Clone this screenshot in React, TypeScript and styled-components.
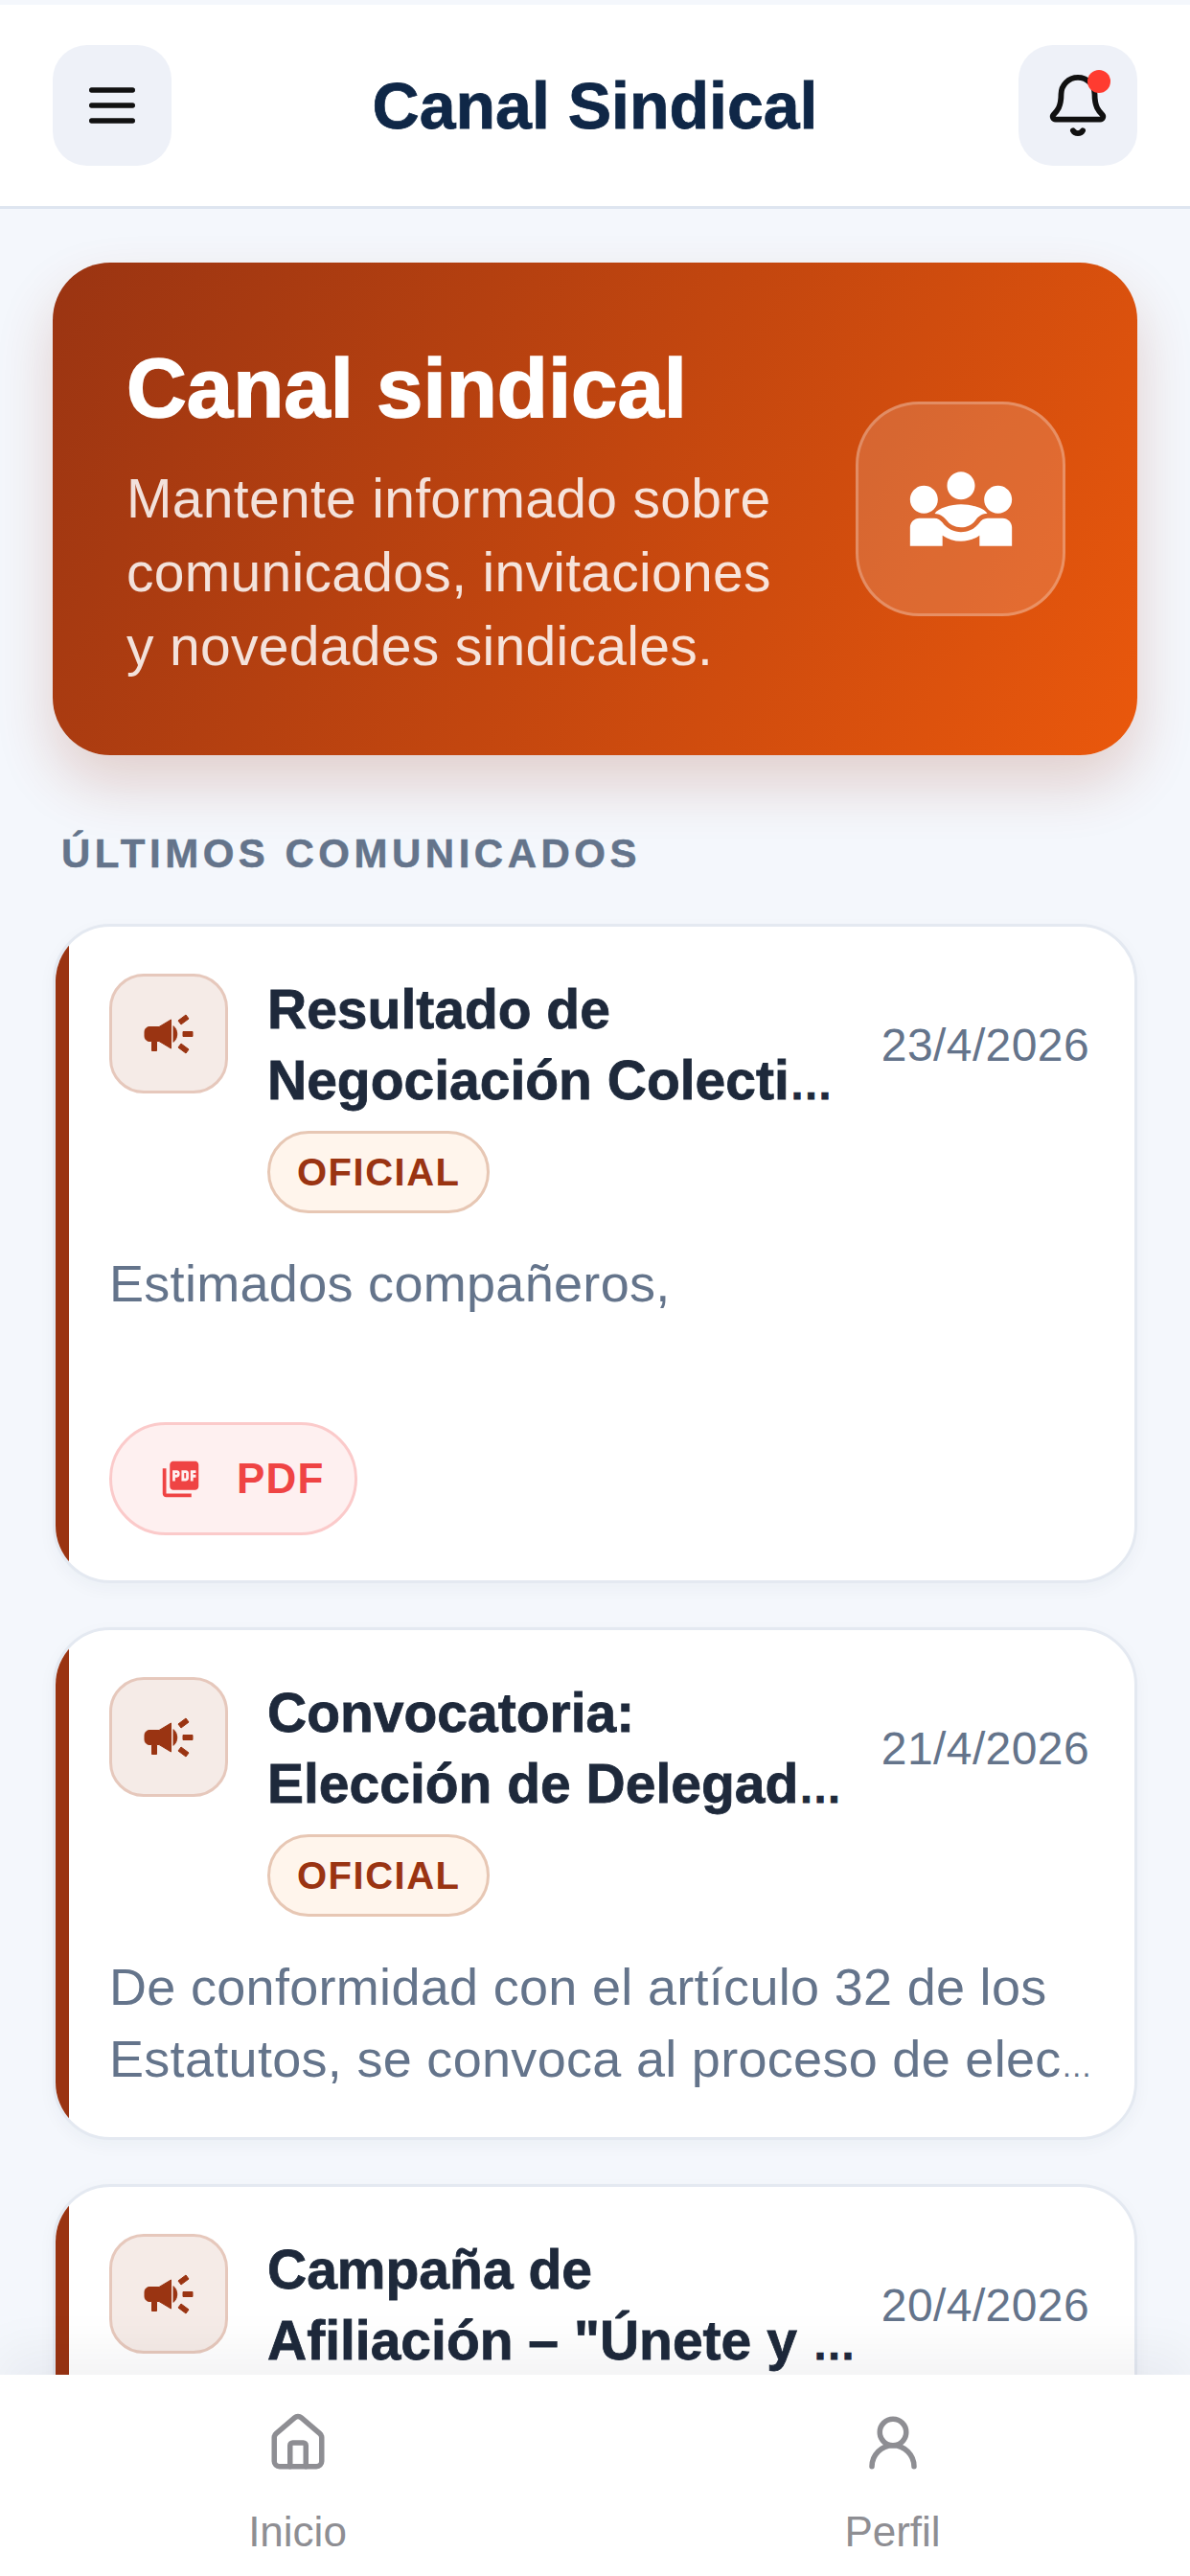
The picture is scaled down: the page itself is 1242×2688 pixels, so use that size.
import React from 'react';
import styled, { createGlobalStyle } from 'styled-components';
import { House, UserRound, Bell } from 'lucide-react';
import { MdDiversity3, MdPictureAsPdf } from 'react-icons/md';

const GlobalStyle = createGlobalStyle`
  html, body {
    margin: 0;
    padding: 0;
    background: #f3f6fb;
    font-family: "Liberation Sans", Arial, sans-serif;
  }
  * { box-sizing: border-box; }
`;

const Screen = styled.div`
  width: 1242px;
  height: 2688px;
  padding-top: 5px;
  display: flex;
  flex-direction: column;
  overflow: hidden;
  background: #f4f7fc;
`;

const Header = styled.header`
  height: 213px;
  flex-shrink: 0;
  padding: 0 55px;
  display: flex;
  align-items: center;
  justify-content: space-between;
  background: #fff;
  border-bottom: 3px solid #dee5f0;
`;

const RoundButton = styled.button`
  position: relative;
  width: 124px;
  height: 126px;
  padding: 0;
  border: none;
  border-radius: 36px;
  display: flex;
  align-items: center;
  justify-content: center;
  background: #eef1f8;
  color: #111;
`;

const RedDot = styled.span`
  position: absolute;
  top: 26px;
  right: 28px;
  width: 24px;
  height: 24px;
  border-radius: 50%;
  background: #ff3b30;
`;

const HeaderTitle = styled.h1`
  margin: 0;
  font-size: 68px;
  font-weight: 700;
  color: #0f2747;
  -webkit-text-stroke: 0.8px #0f2747;
`;

const Content = styled.main`
  flex: 1;
  min-height: 0;
  overflow: hidden;
  padding: 56px 55px 0;
`;

const Hero = styled.section`
  height: 514px;
  padding: 0 75px 0 77px;
  display: flex;
  align-items: center;
  justify-content: space-between;
  border-radius: 60px;
  background: linear-gradient(120deg, #9a3412 0%, #ea580c 100%);
  box-shadow: 0 30px 60px rgba(154, 52, 18, 0.2);
`;

const HeroCopy = styled.div`
  padding-top: 6px;
`;

const HeroTitle = styled.h2`
  margin: 0 0 28px;
  font-size: 87px;
  line-height: 98px;
  font-weight: 700;
  color: #fff;
  -webkit-text-stroke: 1.5px #fff;
`;

const HeroText = styled.p`
  margin: 0;
  width: 700px;
  font-size: 57px;
  line-height: 77px;
  letter-spacing: 0.3px;
  color: rgba(255, 255, 255, 0.85);
`;

const HeroIcon = styled.div`
  width: 219px;
  height: 224px;
  flex-shrink: 0;
  display: flex;
  align-items: center;
  justify-content: center;
  border-radius: 66px;
  border: 3px solid rgba(255, 255, 255, 0.25);
  background: rgba(255, 255, 255, 0.15);
  color: #fff;
`;

const SectionLabel = styled.h3`
  margin: 77px 0 47px 9px;
  font-size: 42px;
  line-height: 52px;
  font-weight: 700;
  letter-spacing: 4.5px;
  color: #64748b;
  -webkit-text-stroke: 0.5px #64748b;
`;

const CardList = styled.div`
  display: flex;
  flex-direction: column;
  gap: 46px;
`;

const Card = styled.article`
  position: relative;
  overflow: hidden;
  padding: 49px 47px 44px 56px;
  border: 3px solid #e4e9f1;
  border-radius: 60px;
  background: #fff;
  box-shadow: 0 6px 18px rgba(15, 39, 71, 0.04);

  &::before {
    content: '';
    position: absolute;
    top: 0;
    bottom: 0;
    left: 0;
    width: 14px;
    background: #9a3412;
  }
`;

const CardHead = styled.div`
  display: flex;
  align-items: flex-start;
  gap: 41px;
`;

const CardIcon = styled.div`
  width: 124px;
  height: 125px;
  flex-shrink: 0;
  display: flex;
  align-items: center;
  justify-content: center;
  border-radius: 36px;
  border: 3px solid #e6c8bc;
  background: #f5ebe7;
  color: #9a3412;
`;

const CardMain = styled.div`
  flex: 1;
  min-width: 0;
  display: flex;
  flex-direction: column;
  align-items: flex-start;
  gap: 16px;
`;

const TitleRow = styled.div`
  width: 100%;
  display: flex;
  align-items: center;
  gap: 24px;
`;

const CardTitle = styled.h4`
  flex: 1;
  min-width: 0;
  margin: 0;
  font-size: 57px;
  line-height: 74px;
  font-weight: 700;
  color: #1e293b;
  white-space: pre;
  -webkit-text-stroke: 0.8px #1e293b;

  span {
    font-size: 0.8em;
    line-height: 0;
  }
`;

const CardDate = styled.span`
  flex-shrink: 0;
  font-size: 48px;
  letter-spacing: 0.4px;
  color: #64748b;
`;

const Badge = styled.span`
  height: 86px;
  padding: 0 28px;
  display: flex;
  align-items: center;
  border: 3px solid #e7c7b4;
  border-radius: 43px;
  background: #fff5ec;
  color: #9a3412;
  font-size: 40px;
  font-weight: 700;
  letter-spacing: 1.5px;
`;

const CardBody = styled.p`
  margin: 36px 0 0;
  height: 150px;
  font-size: 54px;
  line-height: 75px;
  letter-spacing: 0.3px;
  color: #64748b;
  white-space: pre;

  span {
    font-size: 0.6em;
    line-height: 0;
  }
`;

const PdfButton = styled.button`
  margin: 32px 0 3px;
  width: 259px;
  height: 118px;
  padding: 0 0 0 49px;
  display: flex;
  align-items: center;
  gap: 36px;
  border: 3px solid #fbcaca;
  border-radius: 59px;
  background: #fef0f0;
  color: #ef4444;
  font-family: inherit;
  font-size: 44px;
  font-weight: 700;
  letter-spacing: 1.2px;
`;

const BottomNav = styled.nav`
  position: relative;
  height: 210px;
  flex-shrink: 0;
  display: flex;
  background: #fff;
  box-shadow: 0 -24px 50px rgba(15, 23, 42, 0.05);
`;

const NavItem = styled.div`
  flex: 1;
  padding-top: 38px;
  display: flex;
  flex-direction: column;
  align-items: center;
  color: #8e8e93;
  font-size: 44px;
`;

const NavLabel = styled.span`
  margin-top: 34px;
  line-height: 52px;
`;

const MenuGlyph = () => (
  <svg width="64" height="64" viewBox="0 0 24 24" fill="none" stroke="currentColor" strokeWidth="2" strokeLinecap="round">
    <path d="M4 6h16M4 12h16M4 18h16" />
  </svg>
);

const MegaphoneGlyph = () => (
  <svg width="60" height="60" viewBox="0 0 24 24" fill="currentColor" stroke="currentColor" strokeWidth="0.4" strokeLinejoin="round">
    <path d="M18 11v2h4v-2h-4zm-2 6.61c.96.71 2.21 1.65 3.2 2.39.4-.53.8-1.07 1.2-1.6-.99-.74-2.24-1.68-3.2-2.4-.4.54-.8 1.08-1.2 1.61zM20.4 5.6c-.4-.53-.8-1.07-1.2-1.6-.99.74-2.24 1.68-3.2 2.4.4.53.8 1.07 1.2 1.6.96-.72 2.21-1.65 3.2-2.4zM4 9c-1.1 0-2 .9-2 2v2c0 1.1.9 2 2 2h1v4h2v-4h1l5 3V6L8 9H4zm11.5 3c0-1.33-.58-2.53-1.5-3.35v6.69c.92-.81 1.5-2.01 1.5-3.34z" />
  </svg>
);

// the ellipsis sits in a span so each block can size it
const Clipped = ({ text }: { text: string }) =>
  text.endsWith('…') ? (
    <>
      {text.slice(0, -1)}
      <span>…</span>
    </>
  ) : (
    <>{text}</>
  );

const notices = [
  {
    title: 'Resultado de\nNegociación Colecti…',
    date: '23/4/2026',
    body: 'Estimados compañeros,',
    pdf: true,
  },
  {
    title: 'Convocatoria:\nElección de Delegad…',
    date: '21/4/2026',
    body: 'De conformidad con el artículo 32 de los\nEstatutos, se convoca al proceso de elec…',
    pdf: false,
  },
  {
    title: 'Campaña de\nAfiliación – "Únete y …',
    date: '20/4/2026',
    body: 'Invitamos a todos los trabajadores a sumarse.',
    pdf: false,
  },
];

export default function App() {
  return (
    <>
      <GlobalStyle />
      <Screen>
        <Header>
          <RoundButton>
            <MenuGlyph />
          </RoundButton>
          <HeaderTitle>Canal Sindical</HeaderTitle>
          <RoundButton>
            <Bell size={70} strokeWidth={2} />
            <RedDot />
          </RoundButton>
        </Header>
        <Content>
          <Hero>
            <HeroCopy>
              <HeroTitle>Canal sindical</HeroTitle>
              <HeroText>Mantente informado sobre comunicados, invitaciones y novedades sindicales.</HeroText>
            </HeroCopy>
            <HeroIcon>
              <MdDiversity3 size={116} />
            </HeroIcon>
          </Hero>
          <SectionLabel>ÚLTIMOS COMUNICADOS</SectionLabel>
          <CardList>
            {notices.map((notice) => (
              <Card key={notice.date}>
                <CardHead>
                  <CardIcon>
                    <MegaphoneGlyph />
                  </CardIcon>
                  <CardMain>
                    <TitleRow>
                      <CardTitle>
                        <Clipped text={notice.title} />
                      </CardTitle>
                      <CardDate>{notice.date}</CardDate>
                    </TitleRow>
                    <Badge>OFICIAL</Badge>
                  </CardMain>
                </CardHead>
                <CardBody>
                  <Clipped text={notice.body} />
                </CardBody>
                {notice.pdf && (
                  <PdfButton>
                    <MdPictureAsPdf size={45} />
                    PDF
                  </PdfButton>
                )}
              </Card>
            ))}
          </CardList>
        </Content>
        <BottomNav>
          <NavItem>
            <House size={66} strokeWidth={2} />
            <NavLabel>Inicio</NavLabel>
          </NavItem>
          <NavItem>
            <UserRound size={66} strokeWidth={2} />
            <NavLabel>Perfil</NavLabel>
          </NavItem>
        </BottomNav>
      </Screen>
    </>
  );
}
